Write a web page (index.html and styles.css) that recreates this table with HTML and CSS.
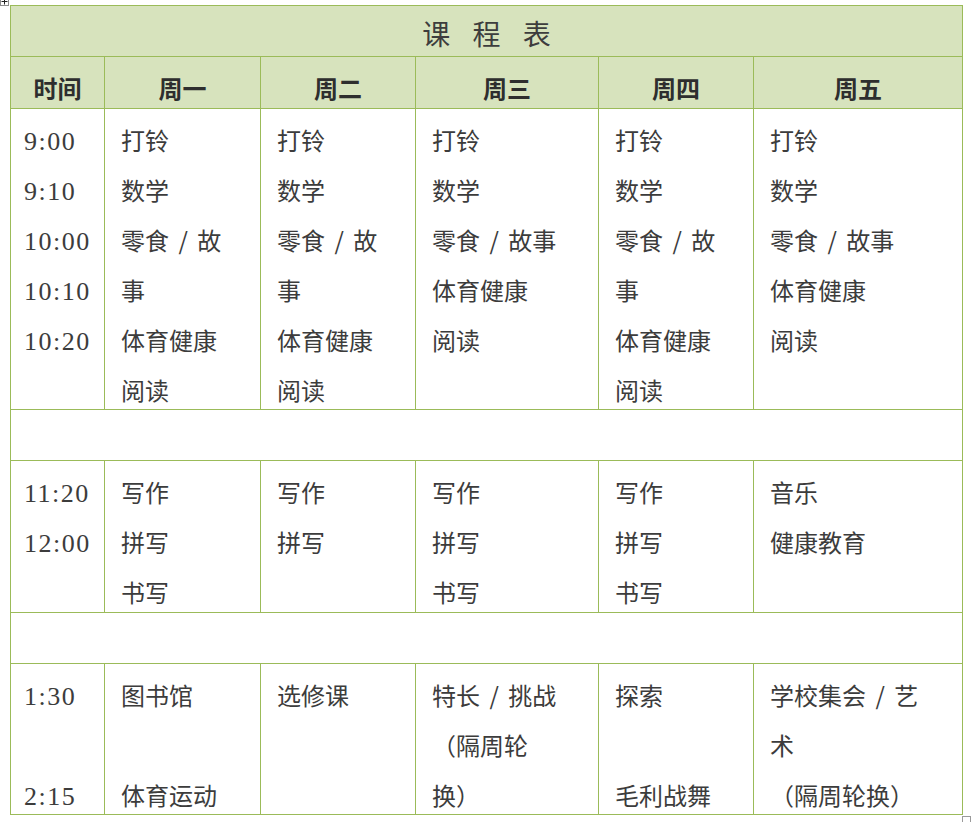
FILE: index.html
```html
<!DOCTYPE html>
<html lang="zh">
<head>
<meta charset="utf-8">
<title>课程表</title>
<link rel="stylesheet" href="styles.css">
</head>
<body>
<div class="move-handle">
  <svg width="7" height="8" viewBox="0 0 7 8" aria-hidden="true">
    <path d="M3.5 1.5 V7.5 M0.5 4.5 H6.5" stroke="#222" stroke-width="1" fill="none"/>
  </svg>
</div>
<div class="page">
  <div class="schedule">
    <div class="title">课 程 表</div>

    <div class="head">时间</div>
    <div class="head">周一</div>
    <div class="head">周二</div>
    <div class="head">周三</div>
    <div class="head">周四</div>
    <div class="head">周五</div>

    <div class="cell time">9:00<br>9:10<br>10:00<br>10:10<br>10:20</div>
    <div class="cell">打铃<br>数学<br>零食 / 故<br>事<br>体育健康<br>阅读</div>
    <div class="cell">打铃<br>数学<br>零食 / 故<br>事<br>体育健康<br>阅读</div>
    <div class="cell">打铃<br>数学<br>零食 / 故事<br>体育健康<br>阅读</div>
    <div class="cell">打铃<br>数学<br>零食 / 故<br>事<br>体育健康<br>阅读</div>
    <div class="cell">打铃<br>数学<br>零食 / 故事<br>体育健康<br>阅读</div>

    <div class="blank"></div>

    <div class="cell time">11:20<br>12:00</div>
    <div class="cell">写作<br>拼写<br>书写</div>
    <div class="cell">写作<br>拼写</div>
    <div class="cell">写作<br>拼写<br>书写</div>
    <div class="cell">写作<br>拼写<br>书写</div>
    <div class="cell">音乐<br>健康教育</div>

    <div class="blank"></div>

    <div class="cell time">1:30<br><br>2:15</div>
    <div class="cell">图书馆<br><br>体育运动</div>
    <div class="cell">选修课</div>
    <div class="cell">特长 / 挑战<br>（隔周轮<br>换）</div>
    <div class="cell">探索<br><br>毛利战舞</div>
    <div class="cell">学校集会 / 艺<br>术<br>（隔周轮换）</div>
  </div>
</div>
<div class="resize-handle"></div>
</body>
</html>
```

FILE: styles.css
```css
html, body {
  margin: 0;
  padding: 0;
  background: #ffffff;
}

body {
  font-family: "Noto Sans CJK SC", "Liberation Serif", sans-serif;
  color: #3c3c3c;
}

.page {
  padding: 5px 0 0 10px;
}

.schedule {
  display: grid;
  grid-template-columns: 93px 155px 154px 182px 154px 208px;
  grid-template-rows: 50px 51px 300px 50px 151px 50px 150px;
  gap: 1px;
  padding: 1px;
  width: max-content;
  background: #9bbb59;
}

.title {
  grid-column: 1 / -1;
  background: #d7e3bd;
  display: flex;
  align-items: center;
  justify-content: center;
  padding-top: 4px;
  padding-left: 8px;
  font-size: 28px;
  letter-spacing: 8px;
  color: #3d3d3d;
}

.head {
  background: #d7e3bd;
  display: flex;
  align-items: center;
  justify-content: center;
  padding-top: 9px;
  font-size: 24px;
  font-weight: 700;
  color: #2e2e2e;
}

.cell {
  background: #ffffff;
  padding: 6px 0 0 16px;
  font-size: 24px;
  line-height: 50px;
  white-space: nowrap;
  word-spacing: 4px;
  overflow: visible;
}

.cell.time {
  padding-top: 8px;
  padding-left: 13px;
  font-family: "Liberation Serif", serif;
  font-size: 26px;
  letter-spacing: 1.5px;
}

.blank {
  grid-column: 1 / -1;
  background: #ffffff;
}

.move-handle {
  position: absolute;
  left: 0;
  top: -4px;
  width: 7px;
  height: 8px;
  border: 1px solid #8c8c8c;
  background: #ffffff;
  display: flex;
}

.resize-handle {
  position: absolute;
  left: 962px;
  top: 816px;
  width: 7px;
  height: 7px;
  border: 1px solid #9a9a9a;
  background: #ffffff;
}
```
